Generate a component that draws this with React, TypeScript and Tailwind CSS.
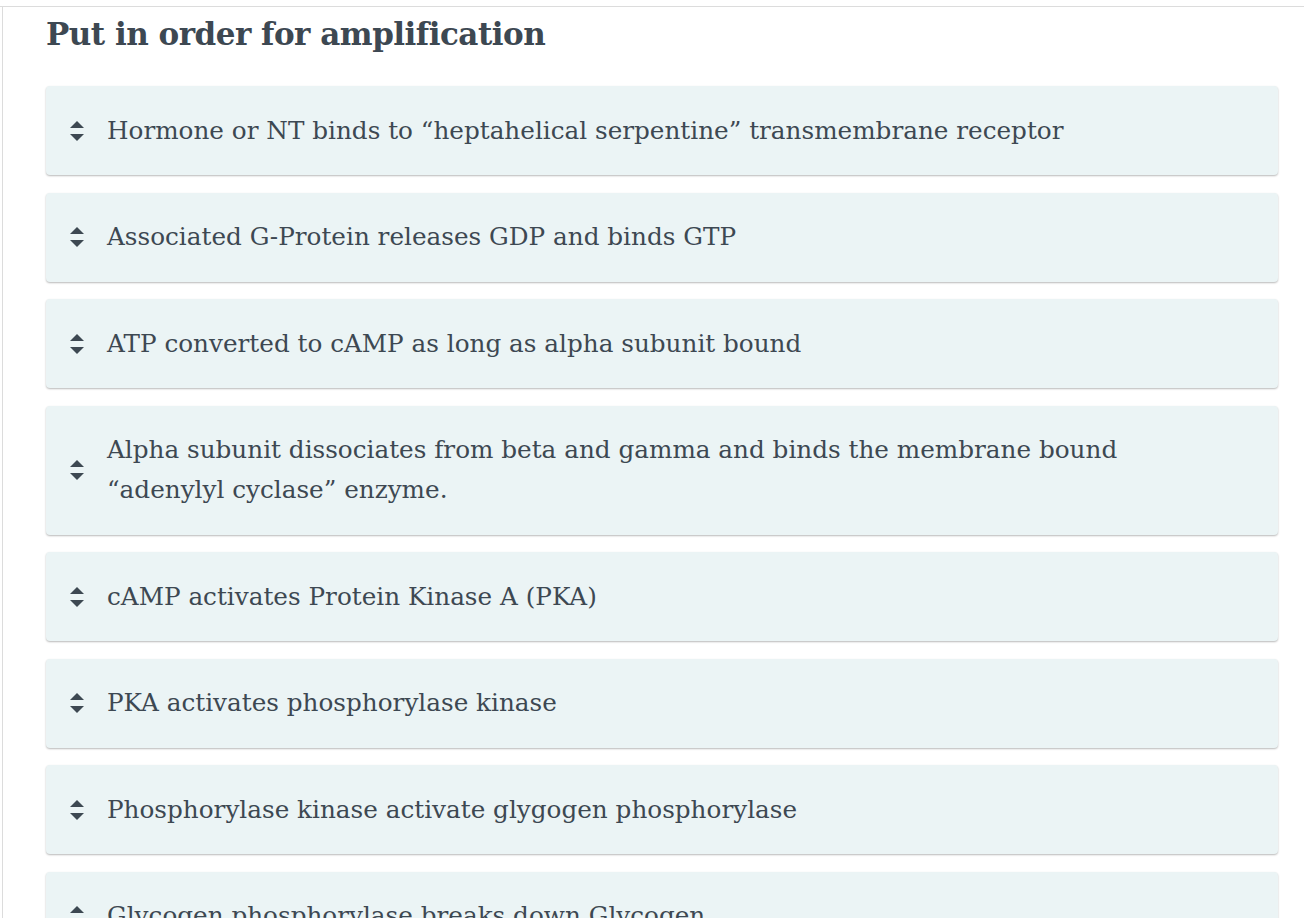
import React from 'react'

const steps = [
  'Hormone or NT binds to “heptahelical serpentine” transmembrane receptor',
  'Associated G-Protein releases GDP and binds GTP',
  'ATP converted to cAMP as long as alpha subunit bound',
  'Alpha subunit dissociates from beta and gamma and binds the membrane bound “adenylyl cyclase” enzyme.',
  'cAMP activates Protein Kinase A (PKA)',
  'PKA activates phosphorylase kinase',
  'Phosphorylase kinase activate glygogen phosphorylase',
  'Glycogen phosphorylase breaks down Glycogen',
]

function SortIcon() {
  return (
    <svg width="16" height="22" viewBox="0 0 16 22" className="shrink-0" aria-hidden>
      <path d="M8 1 L15 8 L1 8 Z" fill="#3d4852" />
      <path d="M1 14 L15 14 L8 21 Z" fill="#3d4852" />
    </svg>
  )
}

export default function App() {
  return (
    <div className="min-h-screen bg-white pt-[6px] text-[#3d4852]" style={{ fontFamily: '"DejaVu Serif", "Liberation Serif", serif' }}>
      <div className="border-t border-[#dcdcdc]">
        <div className="ml-[2px] border-l border-[#dcdcdc] pl-[43px] pr-[26px] pt-[7px]">
          <h1 className="text-[31px] font-bold leading-[40px] tracking-[-0.5px]">Put in order for amplification</h1>

          <div className="mt-[32px] flex flex-col gap-[17.5px]">
            {steps.map((s) => (
              <div
                key={s}
                className="flex items-center gap-[22px] rounded-[4px] bg-[#ebf4f5] py-[24.5px] pl-[23px] pr-[70px] shadow-[0_1px_2px_rgba(0,0,0,0.28)]"
              >
                <SortIcon />
                <span className="text-[24.7px] leading-[40px]">{s}</span>
              </div>
            ))}
          </div>
        </div>
      </div>
    </div>
  )
}
